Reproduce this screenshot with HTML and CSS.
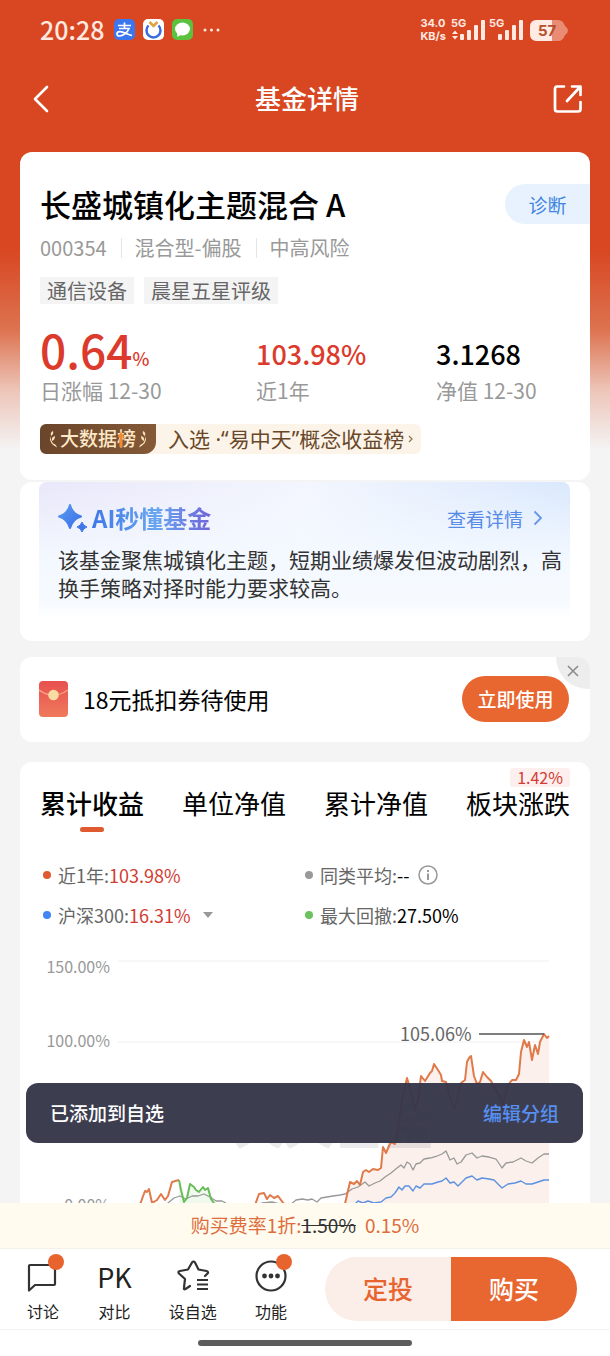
FILE: index.html
```html
<!DOCTYPE html>
<html lang="zh-CN">
<head>
<meta charset="utf-8">
<meta name="viewport" content="width=device-width, initial-scale=1">
<title>基金详情</title>
<link rel="stylesheet" href="styles.css">
</head>
<body>
<div class="app">
  <div class="content">
    <div class="status">
      <span class="clock">20:28</span>
      <svg class="app-icons" width="108" height="22" viewBox="0 0 108 22">
        <rect x="0" y="0" width="21" height="21" rx="5" fill="#3a76ee"/>
        <path d="M4 6.500H17M10.500 3.500V9.500M5 9.500H15C13.500 13.500 9 17 5.500 17C2 17 2 12.700 6 12.700C10 12.700 13 15.500 18 16.500" fill="none" stroke="#fff" stroke-width="1.700"/>
        <rect x="29" y="0" width="21" height="21" rx="5" fill="#fff"/>
        <path d="M34.500 6.500A7 7 0 1 0 44.500 6.500" fill="none" stroke="#3b6be0" stroke-width="2.500"/>
        <path d="M35.500 3L39.500 7L43.500 3" fill="none" stroke="#e2a040" stroke-width="2.500"/>
        <rect x="58" y="0" width="21" height="21" rx="5" fill="#5cc13f"/>
        <ellipse cx="68.500" cy="10" rx="7.500" ry="6.500" fill="#fff"/><path d="M63 13L63.500 18L68 15Z" fill="#fff"/>
        <g fill="#ffe9e0"><circle cx="91" cy="11" r="1.500"/><circle cx="97.500" cy="11" r="1.500"/><circle cx="104" cy="11" r="1.500"/></g>
      </svg>
      <span class="spacer"></span>
      <span class="rate"><span>34.0</span><span>KB/s</span></span>
      <svg width="73" height="28" viewBox="0 -3 73 28">
        <g fill="#ffe9e0">
          <text x="0" y="8" class="net">5G</text><text x="38" y="8" class="net">5G</text>
          <path d="M1 15L4 11.500L7 15ZM1 17L4 20.500L7 17Z"/>
          <rect x="9" y="15" width="4" height="6" rx="1"/><rect x="16" y="11" width="4" height="10" rx="1"/><rect x="23" y="6" width="4" height="15" rx="1"/><rect x="30" y="1" width="4" height="20" rx="1"/>
          <rect x="47" y="15" width="4" height="6" rx="1"/><rect x="54" y="11" width="4" height="10" rx="1"/><rect x="61" y="6" width="4" height="15" rx="1"/><rect x="68" y="1" width="4" height="20" rx="1"/>
        </g>
      </svg>
      <svg class="battery" width="38" height="21" viewBox="0 0 38 21">
        <path d="M7 0H28Q33 0 35 6Q38 8 38 10.500Q38 13 35 15Q33 21 28 21H7Q0 21 0 14V7Q0 0 7 0Z" fill="#ea8c74"/>
        <path d="M7 0H22V21H7Q0 21 0 14V7Q0 0 7 0Z" fill="#ffeae4"/>
        <text x="8" y="16" class="level">57</text>
      </svg>
    </div>
    <header class="nav">
      <button class="icon-btn" aria-label="返回"><svg width="18" height="28" viewBox="0 0 18 28"><path d="M16 2L4 14L16 26" fill="none" stroke="#fff" stroke-width="2.600" stroke-linecap="round" stroke-linejoin="round"/></svg></button>
      <h1>基金详情</h1>
      <button class="icon-btn" aria-label="分享"><svg width="30" height="30" viewBox="0 0 30 30"><path d="M11 2.500H4Q2 2.500 2 5V25Q2 27.500 4.500 27.500H25Q27.500 27.500 27.500 25V18M19 2.500H27.500V11M27 3L14 17" fill="none" stroke="#fff" stroke-width="2.700" stroke-linecap="round" stroke-linejoin="round"/></svg></button>
    </header>
    <main>
      <section class="card summary">
        <div class="title-row"><h2>长盛城镇化主题混合 A</h2><button class="diagnose">诊断</button></div>
        <div class="meta"><span>000354</span><span>混合型-偏股</span><span>中高风险</span></div>
        <div class="tags"><span>通信设备</span><span>晨星五星评级</span></div>
        <div class="figures">
          <div><div class="num red"><span class="big">0.64</span><span class="pct">%</span></div><div class="cap">日涨幅 12-30</div></div>
          <div><div class="num red">103.98%</div><div class="cap">近1年</div></div>
          <div><div class="num">3.1268</div><div class="cap">净值 12-30</div></div>
        </div>
        <a class="rank" href="#rank">
          <span class="badge">
            <svg width="10" height="20" viewBox="0 0 10 20"><path d="M2 7Q1 15 9 18.500Q8 15 5 14.500Q3 12 2 7Z" fill="#fbe3bd"/><path d="M5 2Q2 3 3 7Q6 5 5 2ZM7 7Q3 8 4 12Q7 11 7 7Z" fill="#fbe3bd"/></svg>
            <span>大数据榜</span>
            <svg class="arrow" width="8" height="17" viewBox="0 0 8 17"><path d="M4 1L7.500 6H5.500V16H2.500V6H0.500Z" fill="#f28a2e"/></svg>
            <svg width="10" height="20" viewBox="0 0 10 20"><path d="M8 7Q9 15 1 18.500Q2 15 5 14.500Q7 12 8 7Z" fill="#fbe3bd"/><path d="M5 2Q8 3 7 7Q4 5 5 2ZM3 7Q7 8 6 12Q3 11 3 7Z" fill="#fbe3bd"/></svg>
          </span>
          <span class="rank-text">入选<span class="latin"> ·“</span>易中天<span class="latin">”</span>概念收益榜</span>
          <svg width="6" height="10" viewBox="0 0 6 10"><path d="M1 2L4 5L1 8" fill="none" stroke="#8b735a" stroke-width="1.200"/></svg>
        </a>
      </section>
      <section class="card ai">
        <div class="ai-box">
          <div class="ai-head">
            <svg width="30" height="29" viewBox="0 0 30 29"><defs><linearGradient id="spark" x2="1" y2="1"><stop stop-color="#5a9cf0"/><stop offset="1" stop-color="#3a6ee8"/></linearGradient></defs><path d="M12 1Q14.500 10 23 12.500Q14.500 15 12 24Q9.500 15 1 12.500Q9.500 10 12 1Z" fill="url(#spark)" stroke="url(#spark)" stroke-width="2" stroke-linejoin="round"/><path d="M24 18Q25.200 21.800 29 23Q25.200 24.200 24 28Q22.800 24.200 19 23Q22.800 21.800 24 18Z" fill="#3f76ea" stroke="#3f76ea" stroke-linejoin="round"/></svg>
            <h3>AI秒懂基金</h3>
            <a href="#detail">查看详情<svg width="10" height="16" viewBox="0 0 10 16"><path d="M1.500 1.500L8 8L1.500 14.500" fill="none" stroke="#6696ea" stroke-width="1.800"/></svg></a>
          </div>
          <p>该基金聚焦城镇化主题，短期业绩爆发但波动剧烈，高换手策略对择时能力要求较高。</p>
        </div>
      </section>
      <section class="card coupon">
        <svg width="30" height="36" viewBox="0 0 30 36"><defs><linearGradient id="env" x2="0" y2="1"><stop stop-color="#e8504f"/><stop offset="1" stop-color="#ef7a5c"/></linearGradient></defs><rect width="29" height="36" rx="4" fill="url(#env)"/><path d="M0 9Q14.500 19 29 9" fill="none" stroke="#f6a183" stroke-width="1.500"/><circle cx="14.500" cy="14" r="5.300" fill="#fbdba4"/></svg>
        <span class="coupon-text">18元抵扣券待使用</span>
        <button class="use">立即使用</button>
        <button class="close" aria-label="关闭"><svg width="12" height="12" viewBox="0 0 12 12"><path d="M1 1L11 11M11 1L1 11" stroke="#8c8c8c" stroke-width="1.600"/></svg></button>
      </section>
      <section class="card perf">
        <nav class="tabs">
          <button class="active">累计收益</button><button>单位净值</button><button>累计净值</button><button>板块涨跌<span class="tip">1.42%</span></button>
        </nav>
        <div class="legend">
          <div><i class="dot orange"></i>近1年:<b class="red">103.98%</b></div>
          <div><i class="dot gray"></i>同类平均:<b>--</b><svg class="info" width="20" height="20" viewBox="0 0 20 20"><circle cx="10" cy="10" r="9" fill="none" stroke="#999" stroke-width="1.500"/><path d="M10 8.500V15M10 5V7" stroke="#999" stroke-width="2"/></svg></div>
          <div><i class="dot blue"></i>沪深300:<b class="red">16.31%</b><svg class="caret" width="10" height="6" viewBox="0 0 10 6"><path d="M0 0H10L5 6Z" fill="#999"/></svg></div>
          <div><i class="dot green"></i>最大回撤:<b>27.50%</b></div>
        </div>
        <svg class="chart" viewBox="40 941 530 280">
          <path d="M118 961H549M118 1042H549" stroke="#f0f0f0"/>
          <g class="axis"><text x="110" y="973">150.00%</text><text x="110" y="1047">100.00%</text><text x="110" y="1211">0.00%</text></g>
          <path d="M345 1221V1203L347 1195L350 1182L354 1184L357 1181L360 1185L363 1172L366 1170L369 1172L373 1169L378 1170L381 1168L383 1150L386 1153L389 1146L391 1142L395 1144L398 1128L402 1100L407 1078L411 1092L415 1110L418 1100L421 1076L425 1081L430 1073L434 1064L438 1070L442 1078L446 1082L452 1105L455 1108L461 1083L465 1080L467 1062L471 1056L474 1076L477 1084L480 1082L483 1072L487 1077L491 1081L496 1090L503 1104L508 1085L512 1080L516 1080L519 1070L522 1045L524 1040L527 1047L529 1042L531 1054L533 1060L535 1045L538 1054L541 1040L544 1034L547 1038L549 1036V1221Z" fill="#fbf0ec"/>
          <path d="M179 1180L181 1190L184 1202L190 1184L199 1192L207 1188L216 1203V1221H179Z" fill="#f0f9ee"/>
          <text x="334" y="1144" class="mark">天天基金</text>
          <g fill="none" stroke-linejoin="round">
            <path stroke="#999" stroke-width="1.300" d="M150 1212L155 1204L160 1206L168 1203L174 1198L180 1196L186 1199L192 1196L198 1196L204 1194L210 1197L216 1201L222 1201L226 1203M255 1205L262 1203L272 1202L280 1204L290 1205L296 1200L302 1199L308 1200L312 1199L317 1202L321 1198L327 1197L333 1196L340 1195L345 1194L352 1189L358 1187L365 1182L369 1186L375 1183L380 1181L385 1177L391 1173L397 1168L401 1165L404 1168L407 1162L410 1164L413 1170L416 1164L420 1163L424 1159L430 1158L437 1156L442 1154L446 1151L450 1160L454 1158L457 1164L461 1162L466 1155L472 1153L477 1158L482 1156L489 1157L496 1159L502 1168L506 1163L513 1162L521 1158L526 1161L532 1163L538 1158L544 1154L549 1154"/>
            <path stroke="#5b91df" stroke-width="1.400" d="M352 1207L358 1201L363 1203L368 1201L374 1203L381 1202L386 1198L391 1197L395 1193L399 1187L402 1190L405 1186L409 1186L413 1191L416 1186L420 1188L424 1184L432 1184L438 1182L442 1181L446 1178L450 1183L454 1182L458 1186L466 1178L472 1176L477 1180L482 1178L489 1179L494 1180L498 1184L502 1188L508 1184L515 1183L521 1181L526 1184L532 1184L538 1182L544 1180L549 1180"/>
            <path stroke="#e07a4a" stroke-width="2" d="M139 1208L142 1199L145 1191L147 1192L149 1189L152 1203L157 1200L161 1194L165 1200L168 1196L172 1182L179 1180M254 1208L259 1194L264 1193L267 1199L270 1195L274 1198L278 1196L284 1204M344 1208L347 1195L350 1182L354 1184L357 1181L360 1185L363 1172L366 1170L369 1172L373 1169L378 1170L381 1168L383 1147L386 1153L389 1146L391 1142L395 1144L398 1128L402 1100L407 1078L411 1092L415 1110L418 1100L421 1076L425 1081L430 1073L432 1071L434 1064L438 1070L441 1075L442 1081L446 1082L452 1105L455 1108L461 1083L465 1080L467 1062L469 1058L471 1056L474 1076L477 1084L480 1082L483 1072L487 1077L491 1081L496 1090L503 1104L508 1085L512 1080L516 1080L519 1074L521 1052L524 1040L527 1047L529 1042L531 1054L532 1060L535 1045L538 1054L540 1042L544 1034L547 1038L549 1036"/>
            <path stroke="#69bd59" stroke-width="2" d="M179 1180L181 1190L184 1202L187 1198L190 1184L194 1187L196 1190L199 1192L203 1187L205 1190L208 1188L211 1199L216 1206"/>
            <path stroke="#555" stroke-width="1.500" d="M479 1034H544"/>
          </g>
          <text x="400" y="1041" class="peak">105.06%</text>
        </svg>
      </section>
    </main>
    <div class="toast"><span>已添加到自选</span><a href="#group">编辑分组</a></div>
  </div>
  <footer>
    <div class="fee">购买费率1折:<s>1.50%</s><span>0.15%</span></div>
    <div class="bar">
      <div class="actions">
        <button><svg width="34" height="36" viewBox="0 0 34 36"><path d="M4 7H28Q29 7 29 8V26Q29 27 28 27H9L3 32.500V8Q3 7 4 7Z" fill="none" stroke="#333" stroke-width="2.200" stroke-linejoin="round"/></svg>讨论<i class="pip"></i></button>
        <button><span class="pk">PK</span>对比</button>
        <button><svg width="34" height="36" viewBox="0 0 34 36"><path d="M14 28L9.500 31Q7.500 32 8 29.500L9 21L3 15.500Q1.500 13.500 4 13L12 11.500L16 4.500Q17.500 2.500 19 4.500L22.500 11.500L30.500 13Q33 14 31.500 15.500L29 18" fill="none" stroke="#333" stroke-width="2.200" stroke-linecap="round" stroke-linejoin="round"/><path d="M21 22H32M21 26.500H32M21 31H32" stroke="#333" stroke-width="2.200"/></svg>设自选</button>
        <button><svg width="34" height="36" viewBox="0 0 34 36"><circle cx="17" cy="18" r="14.500" fill="none" stroke="#333" stroke-width="2.200"/><g fill="#333"><circle cx="10.500" cy="18" r="2.400"/><circle cx="17" cy="18" r="2.400"/><circle cx="23.500" cy="18" r="2.400"/></g></svg>功能<i class="pip"></i></button>
      </div>
      <div class="trade"><button class="plan">定投</button><button class="buy">购买</button></div>
    </div>
    <div class="home"><i></i></div>
  </footer>
</div>
</body>
</html>
```

FILE: styles.css
```css
* { box-sizing: border-box; }
body { margin: 0; background: #f4f4f4; color: #000; font-family: "Noto Sans CJK SC", sans-serif; font-size: 19px; }
h1, h2, h3, p { margin: 0; font-weight: 500; }
button { border: 0; padding: 0; margin: 0; background: none; color: inherit; font: inherit; cursor: pointer; }
a { text-decoration: none; color: inherit; }
svg { display: block; flex: none; }
.red { color: #dc3a2c; }

.app { display: flex; flex-direction: column; height: 100vh; }
.content { position: relative; flex: 1; min-height: 0; overflow: hidden; background: linear-gradient(#d84722 0, #d84722 250px, #dd7350 330px, #edc5b8 390px, #f4f4f4 450px); }

.status { display: flex; align-items: center; height: 60px; padding: 0 42px 0 40px; color: #ffe9e0; }
.clock { padding-bottom: 2px; font-size: 25px; font-weight: 500; line-height: 30px; }
.app-icons { margin-left: 10px; }
.spacer { flex: 1; }
.rate { display: flex; flex-direction: column; margin-right: 5px; font: 700 11px/13px "Inter", sans-serif; }
.net { font: 700 11px "Inter", sans-serif; }
.battery { margin-left: 6px; }
.level { font: 700 15px "Inter", sans-serif; fill: #b5502f; }

.nav { display: flex; align-items: center; justify-content: space-between; height: 78px; padding: 0 27px 0 31px; color: #fff; }
.nav h1 { padding-bottom: 2px; font-size: 26px; line-height: 36px; }
.icon-btn { display: flex; min-width: 30px; }

main { display: flex; flex-direction: column; padding: 14px 20px 0; }
.card { background: #fff; border-radius: 12px; }
.summary { padding: 32px 0 26px 20px; }
.title-row { display: flex; align-items: center; justify-content: space-between; }
.title-row h2 { font-size: 31px; line-height: 40px; }
.diagnose { width: 85px; height: 40px; border-radius: 20px 0 0 20px; background: #e8f2fe; color: #4185e0; }
.meta { display: flex; align-items: center; margin-top: 10px; font-size: 20px; line-height: 28px; color: #999; }
.meta span + span { margin-left: 14px; padding-left: 14px; background: linear-gradient(#e5e5e5, #e5e5e5) left / 1px 20px no-repeat; }
.tags { display: flex; gap: 10px; margin-top: 15px; font-size: 20px; color: #666; }
.tags span { padding: 0 7px; line-height: 27px; background: #f4f4f4; }
.figures { display: grid; grid-template-columns: 216fr 180fr 154fr; margin-top: 22px; }
.num { display: flex; align-items: flex-start; height: 50px; font-size: 27px; font-weight: 500; line-height: 56px; }
.big { font-size: 46px; line-height: 46px; }
.pct { font-size: 18px; line-height: 64px; }
.cap { color: #999; font-size: 21px; line-height: 28px; }
.rank { display: inline-flex; align-items: center; height: 30px; margin-top: 20px; padding-right: 7px; border-radius: 6px; background: #fcf4e9; color: #69482a; }
.badge { position: relative; display: flex; align-items: center; gap: 2px; height: 30px; padding: 0 8px; border-radius: 6px 0 12px 6px; background: linear-gradient(90deg, #6b452a, #845a38); color: #fde8c8; font-weight: 500; line-height: 28px; }
.badge > span { padding-bottom: 2px; }
.arrow { position: absolute; right: 31px; top: 7px; }
.rank-text { margin: 0 4px 0 12px; padding-bottom: 2px; font-size: 21px; line-height: 28px; }
.latin { font-family: "Noto Sans", sans-serif; }

.ai { margin-top: 2px; padding: 0 20px 22px 19px; }
.ai-box { padding: 22px 0 18px 19px; border-radius: 8px; background: linear-gradient(rgba(246,250,255,0) 0, #f4f9ff 60%, #f6faff 88%, #fff), linear-gradient(90deg, #e9e7fa, #f3f6fe 50%, #dae8fd); }
.ai-head { display: flex; align-items: center; height: 28px; }
.ai-head h3 { margin-left: 4px; font-size: 24px; font-weight: 700; line-height: 28px; background: linear-gradient(90deg, #3e78e8, #68a6f0 55%, #7163d8); background-clip: text; -webkit-background-clip: text; color: transparent; }
.ai-head a { display: flex; align-items: center; gap: 10px; margin: 0 27px 0 auto; color: #568be8; }
.ai p { margin-top: 13px; font-size: 21px; font-weight: 400; line-height: 28px; color: #333; }

.coupon { position: relative; display: flex; align-items: center; height: 85px; margin-top: 16px; padding: 0 21px 2px 19px; overflow: hidden; }
.coupon-text { margin-left: 14px; font-size: 23px; line-height: 32px; }
.use { width: 107px; height: 46px; margin-left: auto; border-radius: 23px; background: #e86630; color: #fff; font-weight: 500; }
.close { position: absolute; top: 0; right: 0; display: flex; align-items: center; justify-content: center; width: 34px; height: 32px; padding-bottom: 4px; border-radius: 0 0 0 32px; background: #ededed; }

.perf { margin-top: 20px; padding: 25px 20px 0; }
.tabs { display: flex; justify-content: space-between; }
.tabs button { position: relative; height: 48px; padding-bottom: 16px; font-size: 26px; line-height: 32px; font-weight: 400; }
.tabs .active { font-weight: 500; }
.tabs .active::after { content: ""; position: absolute; left: 50%; bottom: 3px; width: 24px; height: 5px; margin-left: -12px; border-radius: 3px; background: #e05a30; }
.tip { position: absolute; top: -19px; right: 0; padding: 0 7px; border-radius: 3px; background: #fdefed; color: #d23c32; font-size: 16px; line-height: 19px; }
.legend { display: grid; grid-template-columns: 1fr 1fr; row-gap: 12px; margin: 26px 3px 0; font-size: 18px; line-height: 28px; color: #666; }
.legend div { display: flex; align-items: center; }
.legend b { font-weight: 400; color: #000; }
.legend .red { color: #d23c32; }
.dot { width: 8px; height: 8px; margin-right: 7px; border-radius: 50%; }
.orange { background: #e05a30; } .gray { background: #999; } .blue { background: #4285f4; } .green { background: #6cc25c; }
.info { margin-left: 8px; } .caret { margin-left: 12px; }
.chart { width: 100%; height: auto; margin-top: 12px; }
.axis { font-size: 16px; text-anchor: end; fill: #999; }
.peak { font-size: 18px; fill: #666; }
.mark { font-size: 50px; font-weight: 700; text-anchor: middle; fill: rgba(60,60,90,.1); }
.toast { position: absolute; left: 26px; right: 27px; bottom: 60px; display: flex; align-items: center; justify-content: space-between; height: 60px; padding: 0 24px 2px; border-radius: 12px; background: rgba(53,53,73,.96); color: #fff; font-weight: 500; }
.toast a { color: #568ff0; }

.fee { height: 46px; line-height: 44px; text-align: center; background: #fffcef; color: #de6c3c; border-bottom: 1px solid #f2f2ea; }
.fee s { color: #333; } .fee span { margin-left: 9px; }
.bar { display: flex; align-items: center; height: 80px; padding: 0 33px 0 26px; background: #fff; }
.actions { display: flex; flex: 1; justify-content: space-between; padding-top: 3px; }
.actions button { position: relative; display: flex; flex-direction: column; align-items: center; min-width: 34px; font-size: 16px; line-height: 24px; color: #222; gap: 5px; }
.pk { height: 36px; font-size: 27px; line-height: 38px; }
.pip { position: absolute; top: -4px; right: -4px; width: 16px; height: 16px; border-radius: 50%; background: #e8642e; }
.trade { display: flex; width: 252px; height: 64px; margin-left: 37px; border-radius: 32px; overflow: hidden; font-size: 25px; font-weight: 500; }
.trade button { flex: 1; padding-bottom: 3px; }
.plan { background: #fbede7; color: #e8642e; }
.trade .buy { background: #e86630; color: #fff; }
.home { display: flex; justify-content: center; height: 27px; padding-top: 10px; background: #fff; border-top: 1px solid #f3f3f3; }
.home i { width: 35%; height: 6px; border-radius: 3px; background: #5c5c5c; }
```
